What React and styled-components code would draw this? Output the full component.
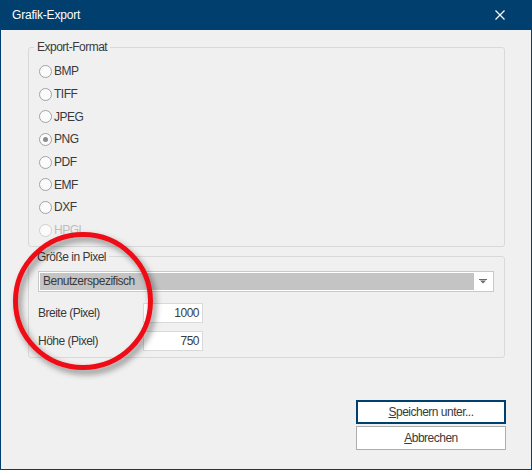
import React from 'react'
import styled, { createGlobalStyle } from 'styled-components'

const GlobalStyle = createGlobalStyle`
  html, body {
    margin: 0;
    padding: 0;
    background: #f0f0f0;
  }
  * {
    box-sizing: border-box;
  }
`

const accent = '#003f6e'
const uiFont = `"Liberation Sans", Arial, sans-serif`

const Window = styled.div`
  position: relative;
  width: 532px;
  height: 470px;
  border: 1px solid ${accent};
  border-top: none;
  background: #f0f0f0;
  display: flex;
  flex-direction: column;
  font-family: ${uiFont};
  font-size: 12px;
  letter-spacing: -0.5px;
  color: #3a3a3a;
  overflow: hidden;
`

const TitleBar = styled.div`
  height: 30px;
  flex: none;
  background: ${accent};
  color: #fff;
  display: flex;
  align-items: center;
  justify-content: space-between;
  padding: 0 27px 0 12px;
  font-size: 12px;
  letter-spacing: -0.2px;
  margin: 0 -1px;
`

const Content = styled.div`
  flex: 1;
  display: flex;
  flex-direction: column;
  padding: 9px 26px 0 27px;
`

const Group = styled.fieldset`
  margin: ${p => p.$top}px 0 0 0;
  padding: ${p => p.$pad};
  border: 1px solid #d9d9d9;
  border-radius: 3px;
  min-width: 0;
`

const Legend = styled.legend`
  padding: 0 3px;
  margin-left: -4px;
  line-height: 16px;
`

const RadioRow = styled.div`
  height: 22.7px;
  display: flex;
  align-items: center;
  gap: 2px;
  color: ${p => (p.$disabled ? '#bdbdbd' : '#3a3a3a')};
`

const RadioDot = styled.span`
  width: 13px;
  height: 13px;
  border-radius: 50%;
  border: 1px solid ${p => (p.$disabled ? '#cfcfcf' : '#a2a2a2')};
  background: #fbfbfb;
  display: flex;
  align-items: center;
  justify-content: center;
  flex: none;
  margin-left: 1px;

  &::after {
    content: '';
    width: 5px;
    height: 5px;
    border-radius: 50%;
    background: ${p => (p.$checked ? '#8c8c8c' : 'transparent')};
  }
`

const Combo = styled.div`
  height: 21px;
  border: 1px solid #c9c9c9;
  background: #fff;
  padding: 1px;
  display: flex;
  align-items: stretch;
`

const ComboValue = styled.div`
  flex: 1;
  background: #c4c4c4;
  padding-left: 3px;
  display: flex;
  align-items: center;
`

const ComboArrow = styled.div`
  width: 18px;
  display: flex;
  align-items: center;
  justify-content: center;
`

const FieldRow = styled.div`
  display: flex;
  align-items: center;
  margin-top: ${p => p.$top}px;
`

const FieldLabel = styled.label`
  width: 105px;
`

const NumberBox = styled.div`
  width: 60px;
  height: 20px;
  border: 1px solid #d9d9d9;
  background: #fff;
  text-align: right;
  padding: 0 3px;
  line-height: 18px;
`

const Buttons = styled.div`
  display: flex;
  flex-direction: column;
  align-items: flex-end;
  gap: 2px;
  margin-top: 42px;
  margin-right: -1px;
`

const Button = styled.button`
  width: 150px;
  height: 24px;
  background: #fff;
  border: ${p => (p.$primary ? `2px solid ${accent}` : '1px solid #adadad')};
  font-family: ${uiFont};
  font-size: 12px;
  letter-spacing: -0.5px;
  color: #3a3a3a;
  padding: 0;
`

const Overlay = styled.svg`
  position: absolute;
  left: 0;
  top: 0;
  pointer-events: none;
`

const formats = ['BMP', 'TIFF', 'JPEG', 'PNG', 'PDF', 'EMF', 'DXF', 'HPGL']

export default function App() {
  return (
    <>
      <GlobalStyle />
      <Window>
        <TitleBar>
          <span>Grafik-Export</span>
          <svg width="10" height="10" viewBox="0 0 10 10">
            <path d="M0.5 0.5 L9.5 9.5 M9.5 0.5 L0.5 9.5" stroke="#fff" strokeWidth="1.2" />
          </svg>
        </TitleBar>
        <Content>
          <Group $top={0} $pad="5px 10px 4px 9px">
            <Legend>Export-Format</Legend>
            {formats.map(f => (
              <RadioRow key={f} $disabled={f === 'HPGL'}>
                <RadioDot $checked={f === 'PNG'} $disabled={f === 'HPGL'} />
                {f}
              </RadioRow>
            ))}
          </Group>
          <Group $top={2} $pad="6px 10px 6px 9px">
            <Legend>Größe in Pixel</Legend>
            <Combo>
              <ComboValue>Benutzerspezifisch</ComboValue>
              <ComboArrow>
                <svg width="8" height="5" viewBox="0 0 8 5">
                  <path d="M0 0 H8 V1 H0 Z M1 1.5 H7 L4 4.5 Z" fill="#6b6b6b" />
                </svg>
              </ComboArrow>
            </Combo>
            <FieldRow $top={11}>
              <FieldLabel>Breite (Pixel)</FieldLabel>
              <NumberBox>1000</NumberBox>
            </FieldRow>
            <FieldRow $top={8}>
              <FieldLabel>Höhe (Pixel)</FieldLabel>
              <NumberBox>750</NumberBox>
            </FieldRow>
          </Group>
          <Buttons>
            <Button $primary>
              <u>S</u>peichern unter...
            </Button>
            <Button>
              <u>A</u>bbrechen
            </Button>
          </Buttons>
        </Content>
        <Overlay width="532" height="470">
          <defs>
            <filter id="shadow" x="-30%" y="-30%" width="160%" height="160%">
              <feDropShadow dx="3" dy="4" stdDeviation="3" floodColor="#000" floodOpacity="0.45" />
            </filter>
          </defs>
          <ellipse
            cx="82"
            cy="301"
            rx="67.5"
            ry="66.5"
            fill="none"
            stroke="#ee0f16"
            strokeWidth="5"
            filter="url(#shadow)"
          />
        </Overlay>
      </Window>
    </>
  )
}
